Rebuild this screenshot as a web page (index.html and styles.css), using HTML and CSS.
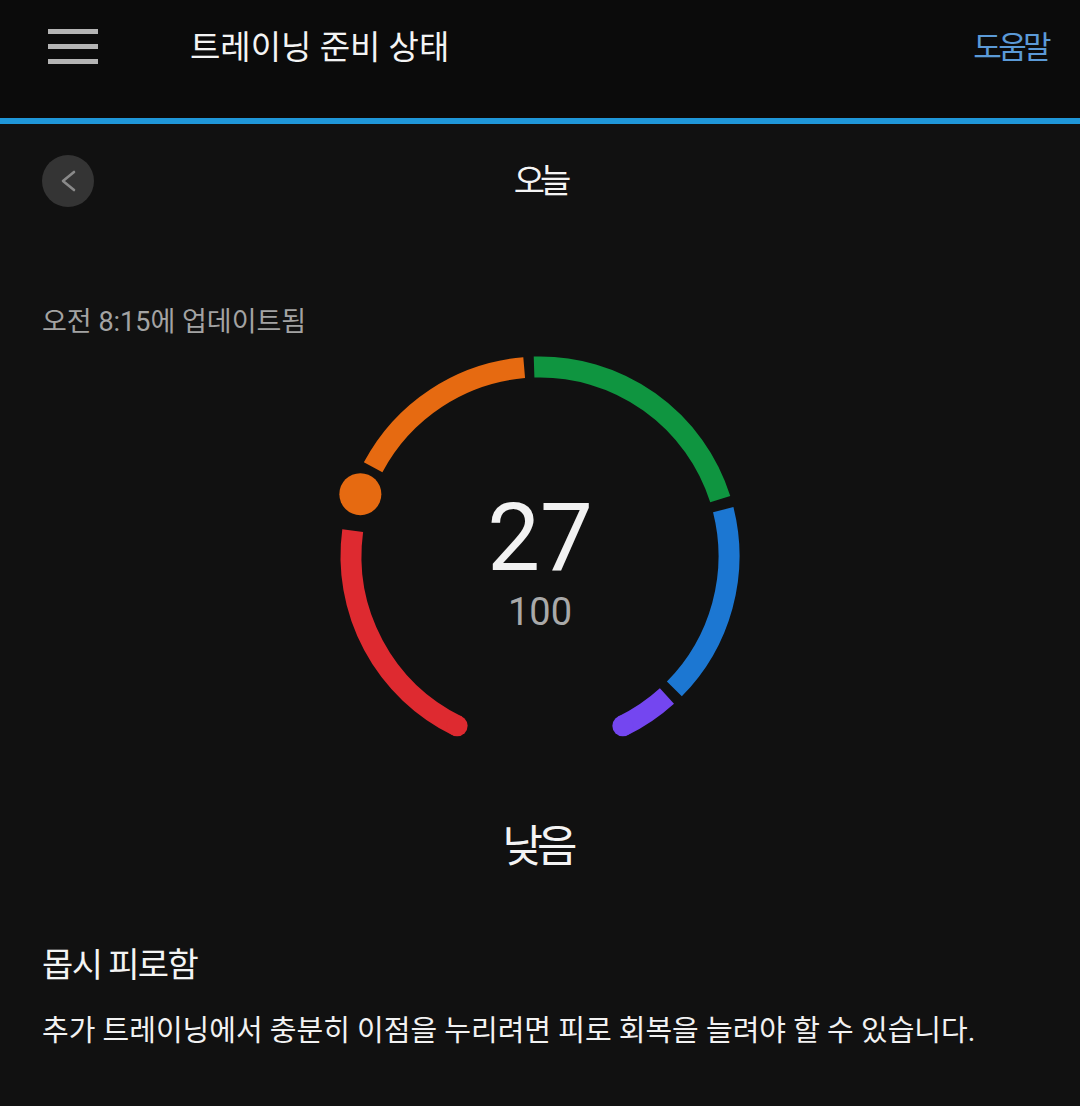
FILE: index.html
```html
<!DOCTYPE html>
<html lang="ko">
<head>
<meta charset="utf-8">
<title>트레이닝 준비 상태</title>
<link rel="stylesheet" href="styles.css">
</head>
<body>
<header class="topbar">
  <svg class="menu-icon" width="50" height="35" viewBox="0 0 50 35" aria-hidden="true">
    <rect x="0" y="0" width="50" height="5" fill="#b4b4b4"/>
    <rect x="0" y="15" width="50" height="5" fill="#b4b4b4"/>
    <rect x="0" y="30" width="50" height="5" fill="#b4b4b4"/>
  </svg>
  <h1 class="title">트레이닝 준비 상태</h1>
  <a class="help">도움말</a>
</header>

<main class="content">
  <div class="day-row">
    <button class="back-btn" aria-label="이전">
      <svg width="52" height="52" viewBox="0 0 52 52" aria-hidden="true">
        <polyline points="32,17 21,26 32,35" fill="none" stroke="#8a8a8a" stroke-width="2.6" stroke-linecap="round" stroke-linejoin="round"/>
      </svg>
    </button>
    <div class="day">오늘</div>
    <div class="spacer"></div>
  </div>

  <p class="updated">오전 8:15에 업데이트됨</p>

  <div class="gauge">
    <svg width="436" height="436" viewBox="0 0 436 436" aria-hidden="true">
      <g fill="none" stroke-width="21" stroke-linecap="butt">
        <path d="M135.14 387.87 A189 189 0 0 1 30.70 192.68" stroke="#de2a30"/>
        <path d="M51.12 129.27 A189 189 0 0 1 202.18 29.66" stroke="#e66a11"/>
        <path d="M212.06 29.09 A189 189 0 0 1 398.25 161.17" stroke="#0f9540"/>
        <path d="M401.23 171.64 A189 189 0 0 1 352.36 350.92" stroke="#1c77d2"/>
        <path d="M344.94 358.01 A189 189 0 0 1 300.85 387.87" stroke="#7446f0"/>
      </g>
      <circle cx="135.14" cy="387.87" r="10.5" fill="#de2a30"/>
      <circle cx="300.85" cy="387.87" r="10.5" fill="#7446f0"/>
      <circle cx="38.35" cy="156.14" r="21" fill="#e66a11"/>
    </svg>
    <div class="gauge-center">
      <div class="score">27</div>
      <div class="max">100</div>
    </div>
  </div>

  <div class="level">낮음</div>

  <h2 class="status">몹시 피로함</h2>
  <p class="desc">추가 트레이닝에서 충분히 이점을 누리려면 피로 회복을 늘려야 할 수 있습니다.</p>
</main>
</body>
</html>
```

FILE: styles.css
```css
* {
  box-sizing: border-box;
}

html, body {
  margin: 0;
  padding: 0;
  background: #111111;
}

body {
  width: 1080px;
  height: 1106px;
  overflow: hidden;
  font-family: Roboto, "Noto Sans CJK KR", sans-serif;
  color: #f2f2f2;
}

.topbar {
  height: 124px;
  background: #0b0b0b;
  border-bottom: 6px solid #1f97d9;
  display: flex;
  align-items: center;
  padding: 0 32px 22px 48px;
}

.menu-icon {
  display: block;
  flex: none;
  margin-top: -4px;
}

.title {
  margin: 0 0 0 92px;
  font-size: 33px;
  font-weight: 400;
  letter-spacing: 0;
  line-height: 44px;
  color: #f4f4f4;
  flex: 1;
}

.help {
  font-size: 31px;
  letter-spacing: -3.6px;
  line-height: 40px;
  color: #5b9ad7;
}

.content {
  display: flex;
  flex-direction: column;
}

.day-row {
  display: grid;
  grid-template-columns: 52px 1fr 52px;
  align-items: center;
  padding: 0 42px;
  margin-top: 31px;
  height: 52px;
}

.back-btn {
  width: 52px;
  height: 52px;
  border-radius: 50%;
  background: #343434;
  border: none;
  padding: 0;
  display: block;
}

.back-btn svg {
  display: block;
}

.day {
  text-align: center;
  font-size: 34px;
  letter-spacing: -5px;
  line-height: 44px;
  color: #f4f4f4;
}

.updated {
  margin: 99px 0 0 42px;
  font-size: 27px;
  letter-spacing: 0;
  line-height: 32px;
  color: #a3a3a3;
}

.gauge {
  position: relative;
  width: 436px;
  height: 436px;
  margin: 0 auto;
  flex: none;
}

.gauge svg {
  display: block;
}

.gauge-center {
  position: absolute;
  top: 153px;
  left: 0;
  right: 0;
  display: flex;
  flex-direction: column;
  align-items: center;
}

.score {
  font-size: 94px;
  line-height: 94px;
  font-weight: 400;
  color: #f2f2f2;
}

.max {
  margin-top: 8px;
  font-size: 38px;
  line-height: 38px;
  color: #a9a9a9;
}

.level {
  margin-top: 45px;
  text-align: center;
  font-size: 44px;
  letter-spacing: -6px;
  line-height: 56px;
  color: #f4f4f4;
  padding-right: 6px;
}

.status {
  margin: 68px 0 0 42px;
  font-size: 34px;
  font-weight: 400;
  letter-spacing: -1.6px;
  line-height: 44px;
  color: #f4f4f4;
}

.desc {
  margin: 24px 0 0 42px;
  font-size: 29px;
  letter-spacing: 0;
  line-height: 40px;
  color: #f2f2f2;
}
```
